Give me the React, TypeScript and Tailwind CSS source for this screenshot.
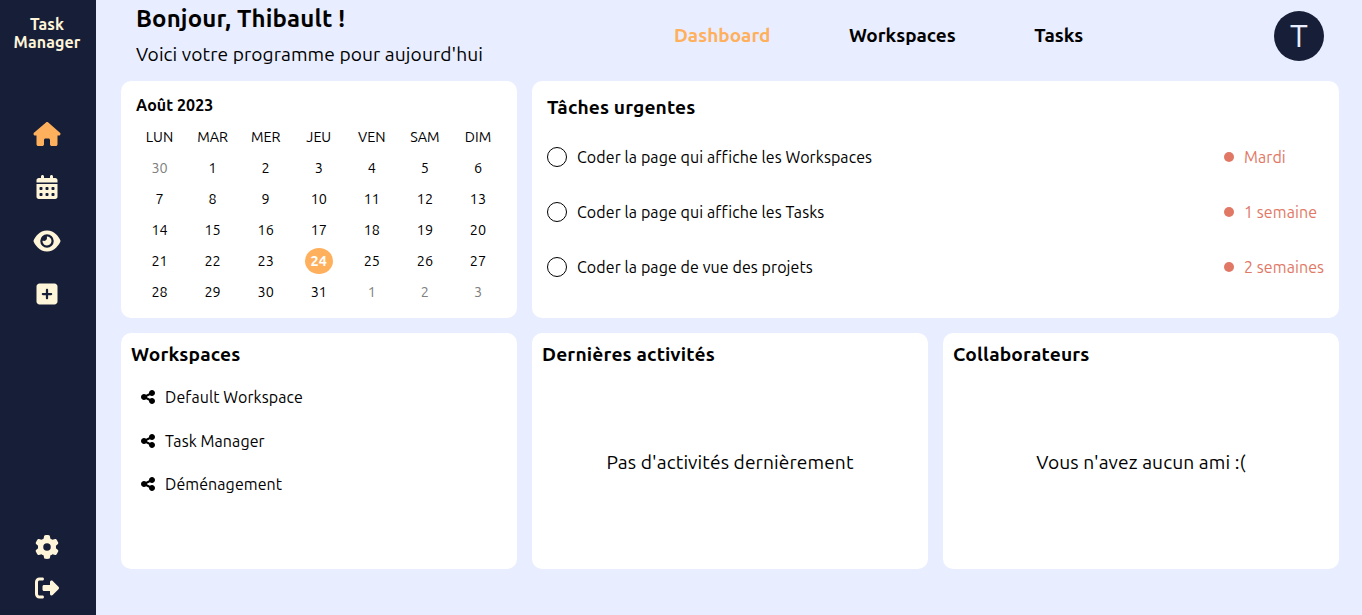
import type { ReactNode } from "react";
import {
  FaCalendarDays,
  FaEye,
  FaGear,
  FaHouse,
  FaRightFromBracket,
  FaShareNodes,
  FaSquarePlus,
} from "react-icons/fa6";

const weekDays = ["LUN", "MAR", "MER", "JEU", "VEN", "SAM", "DIM"];

const days = [30, ...Array.from({ length: 31 }, (_, i) => i + 1), 1, 2, 3];

const tasks = [
  { name: "Coder la page qui affiche les Workspaces", due: "Mardi" },
  { name: "Coder la page qui affiche les Tasks", due: "1 semaine" },
  { name: "Coder la page de vue des projets", due: "2 semaines" },
];

const workspaces = ["Default Workspace", "Task Manager", "Déménagement"];

function Sidebar() {
  return (
    <aside className="flex w-24 shrink-0 flex-col items-center bg-[#171f38] pr-0.5 pt-[15px] text-[#fff5d9]">
      <div className="text-center text-base font-bold leading-[18px] tracking-[0.1px]">
        Task
        <br />
        Manager
      </div>
      <nav className="mt-[71px] flex flex-col items-center gap-[29.33px]">
        <FaHouse className="h-6 w-7 text-[#ffb05c]" />
        <FaCalendarDays className="h-6 w-[22px]" />
        <FaEye className="h-6 w-7" />
        <FaSquarePlus className="h-6 w-[22px]" />
      </nav>
      <div className="mb-[15px] mt-auto flex flex-col items-center gap-[17px]">
        <FaGear className="size-6" />
        <FaRightFromBracket className="size-6" />
      </div>
    </aside>
  );
}

function Header() {
  return (
    <header className="flex h-[81px] shrink-0">
      <div className="w-[538px] pl-[15px]">
        <h1 className="pt-1 text-2xl font-bold leading-[29px] tracking-[0.15px]">
          Bonjour, Thibault !
        </h1>
        <p className="mt-2.5 text-[19.2px] leading-[22px] tracking-[0.08px]">
          Voici votre programme pour aujourd'hui
        </p>
      </div>
      <nav className="flex gap-[78.5px] pl-[15px] pt-6 text-[19px] font-bold leading-[22px]">
        <a className="text-[#ffb05c]">Dashboard</a>
        <a>Workspaces</a>
        <a>Tasks</a>
      </nav>
      <div className="ml-auto mr-[15px] mt-[11px] flex size-[50px] items-center justify-center rounded-full bg-[#171f38] pb-[3px] text-[32px] text-[#e8edff]">
        T
      </div>
    </header>
  );
}

function Calendar() {
  return (
    <section className="rounded-[10px] bg-white pt-[15px]">
      <h2 className="pl-[15px] text-base font-bold leading-[18px] tracking-[0.05px]">Août 2023</h2>
      <div className="ml-3 mt-2 grid w-[371.5px] auto-rows-[31px] grid-cols-7 items-center text-center text-[14.4px]">
        {weekDays.map((d) => (
          <span key={d}>{d}</span>
        ))}
        {days.map((d, i) =>
          i === 24 ? (
            <span
              key={i}
              className="mx-auto mb-0.5 flex h-[26px] w-[28px] items-center justify-center rounded-[50%] bg-[#ffb05c] pt-0.5 font-bold text-white"
            >
              {d}
            </span>
          ) : (
            <span key={i} className={i === 0 || i > 31 ? "text-[#808080]" : ""}>
              {d}
            </span>
          ),
        )}
      </div>
    </section>
  );
}

function UrgentTasks() {
  return (
    <section className="col-span-2 rounded-[10px] bg-white px-[15px] pt-[15px]">
      <h2 className="text-[19.2px] font-bold leading-[22px] tracking-[0.12px]">Tâches urgentes</h2>
      <ul className="mt-[29px] flex flex-col gap-[35px]">
        {tasks.map((t) => (
          <li key={t.name} className="flex h-5 items-center gap-2.5 text-base tracking-[0.08px]">
            <span className="size-5 rounded-full border border-black" />
            <span>{t.name}</span>
            <span className="ml-auto flex w-[100px] items-center gap-2.5 whitespace-nowrap text-[#e17866]">
              <span className="size-2.5 shrink-0 rounded-full bg-[#e17866]" />
              {t.due}
            </span>
          </li>
        ))}
      </ul>
    </section>
  );
}

function Card({ title, children }: { title: string; children: ReactNode }) {
  return (
    <section className="flex flex-col rounded-[10px] bg-white px-2.5 pt-2.5">
      <h2 className="text-[19.2px] font-bold leading-[22px] tracking-[0.16px]">{title}</h2>
      {children}
    </section>
  );
}

export default function App() {
  return (
    <div className="flex h-[615px] bg-[#e8edff] font-['Ubuntu','Noto_Sans',sans-serif] text-black">
      <Sidebar />
      <main className="flex flex-1 flex-col pl-[25px] pr-[23px]">
        <Header />
        <div className="grid h-[488px] grid-cols-3 grid-rows-2 gap-[15px]">
          <Calendar />
          <UrgentTasks />
          <Card title="Workspaces">
            <ul className="ml-2.5 mt-[23.8px] flex flex-col gap-[25.5px]">
              {workspaces.map((w) => (
                <li key={w} className="flex h-[18px] items-center gap-2.5 text-base tracking-[0.08px]">
                  <FaShareNodes className="h-4 w-[14px]" />
                  {w}
                </li>
              ))}
            </ul>
          </Card>
          <Card title="Dernières activités">
            <p className="mt-[86px] text-center text-[19.2px] leading-[22px] tracking-[0.1px]">
              Pas d'activités dernièrement
            </p>
          </Card>
          <Card title="Collaborateurs">
            <p className="mt-[86px] text-center text-[19.2px] leading-[22px] tracking-[0.1px]">
              Vous n'avez aucun ami :(
            </p>
          </Card>
        </div>
      </main>
    </div>
  );
}
